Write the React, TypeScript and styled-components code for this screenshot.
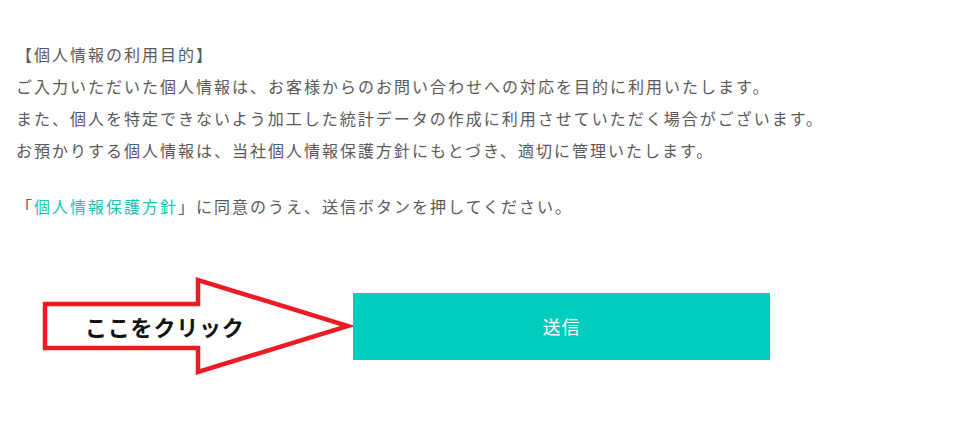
import styled, { createGlobalStyle } from 'styled-components';

const GlobalStyle = createGlobalStyle`
  html, body {
    margin: 0;
    padding: 0;
    background: #fff;
  }
  body {
    font-family: "Noto Sans CJK JP", "Noto Sans", sans-serif;
  }
`;

const Page = styled.div`
  width: 966px;
  height: 443px;
  box-sizing: border-box;
  padding: 38px 0 0 16px;
`;

const Notice = styled.p<{ $gap?: number }>`
  margin: 0 0 ${(p) => p.$gap ?? 0}px;
  font-size: 16px;
  line-height: 32px;
  letter-spacing: 2px;
  color: #595959;
  white-space: nowrap;
`;

const PolicyLink = styled.a`
  color: #1cc3b6;
  text-decoration: none;
`;

const SubmitRow = styled.div`
  display: flex;
  align-items: center;
  margin: 54px 0 0 25px;
`;

const ArrowBox = styled.div`
  position: relative;
  width: 312px;
  height: 100px;
  flex: none;

  svg {
    display: block;
  }
`;

const ArrowLabel = styled.span`
  position: absolute;
  left: 44px;
  top: 50%;
  transform: translateY(-50%);
  font-size: 22px;
  font-weight: 700;
  letter-spacing: 0.8px;
  color: #111;
  white-space: nowrap;
`;

const SubmitButton = styled.button`
  width: 417px;
  height: 67px;
  flex: none;
  border: none;
  background: #00cdbd;
  color: #fff;
  font-family: inherit;
  font-size: 18px;
  letter-spacing: 1px;
  cursor: pointer;
`;

const ClickArrow = () => (
  <ArrowBox>
    <svg width="312" height="100" viewBox="0 0 312 100">
      <polygon
        points="4,28 157,28 157,4 307,50 157,96 157,72 4,72"
        fill="#fff"
        stroke="#ed1c24"
        strokeWidth="4.5"
        strokeLinejoin="miter"
        strokeMiterlimit="4"
      />
    </svg>
    <ArrowLabel>ここをクリック</ArrowLabel>
  </ArrowBox>
);

const App = () => {
  return (
    <>
      <GlobalStyle />
      <Page>
        <Notice $gap={24}>
          【個人情報の利用目的】
          <br />
          ご入力いただいた個人情報は、お客様からのお問い合わせへの対応を目的に利用いたします。
          <br />
          また、個人を特定できないよう加工した統計データの作成に利用させていただく場合がございます。
          <br />
          お預かりする個人情報は、当社個人情報保護方針にもとづき、適切に管理いたします。
        </Notice>
        <Notice>
          「<PolicyLink href="#">個人情報保護方針</PolicyLink>」に同意のうえ、送信ボタンを押してください。
        </Notice>
        <SubmitRow>
          <ClickArrow />
          <SubmitButton type="button">送信</SubmitButton>
        </SubmitRow>
      </Page>
    </>
  );
};

export default App;
